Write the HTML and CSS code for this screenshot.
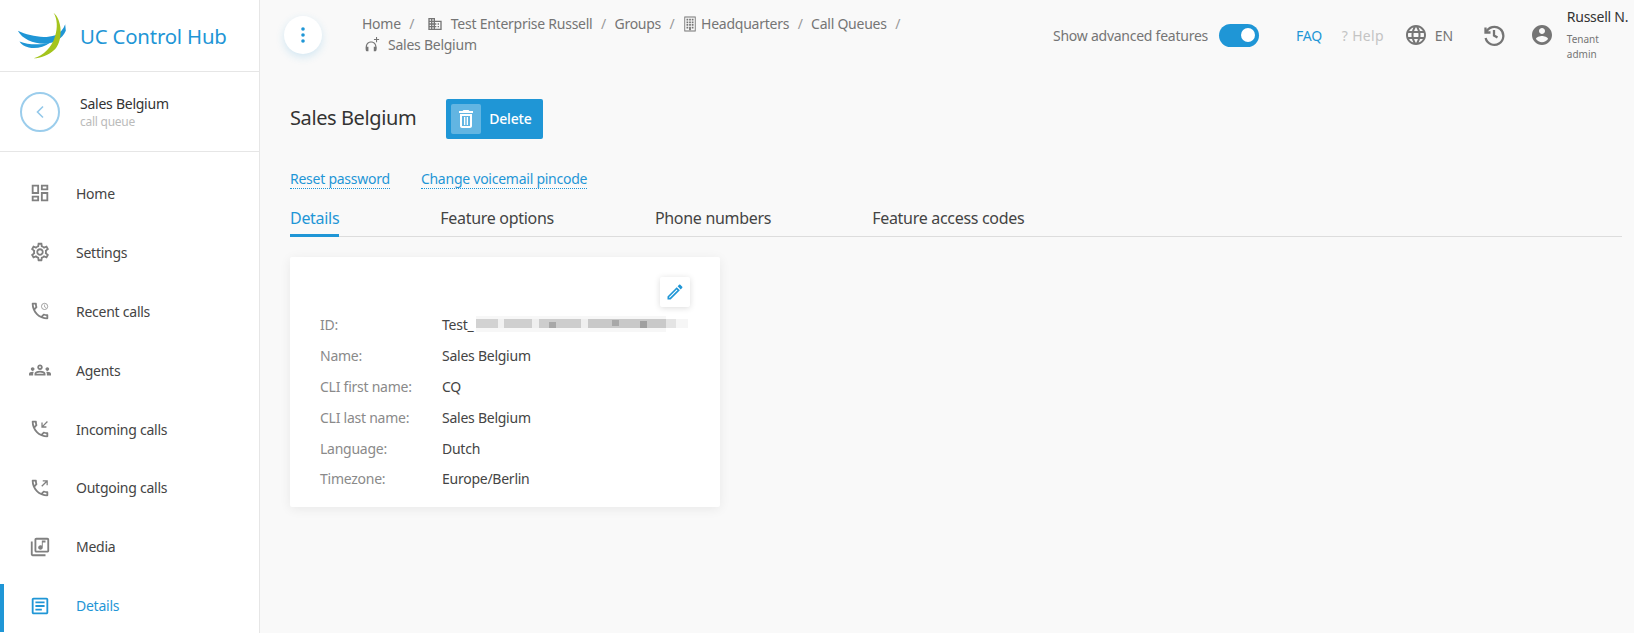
FILE: index.html
```html
<!DOCTYPE html>
<html lang="en">
<head>
  <meta charset="UTF-8">
  <meta name="viewport" content="width=device-width, initial-scale=1.0">
  <title>UC Control Hub</title>
  <link rel="stylesheet" href="styles.css">
</head>
<body>
  <aside class="sidebar">
    <div class="brand">
      <svg class="logo" viewBox="50 28 150 142">
        <path fill="#1f96d6" d="M52 85C85 100 130 110 165 98C180 92 190 80 195 65L197 85C185 110 165 122 135 124C100 125 65 110 52 85Z"/>
        <path fill="#1f96d6" d="M57 117C85 128 120 128 150 120C130 135 105 140 85 135C72 132 62 126 57 117Z"/>
        <path fill="#a4c41d" d="M160 30C185 50 190 110 165 140C145 160 120 168 100 168C130 160 155 135 165 100C172 75 172 50 160 30Z"/>
      </svg>
      <span class="brand-name">UC Control Hub</span>
    </div>
    <div class="context">
      <div class="back">
        <svg width="12" height="14" viewBox="0 0 12 14"><path d="M9 1.500 3.500 7 9 12.500" fill="none" stroke="#93c8ea" stroke-width="1.600"/></svg>
      </div>
      <div>
        <div class="context-name">Sales Belgium</div>
        <div class="context-type">call queue</div>
      </div>
    </div>
    <nav class="nav">
      <a class="nav-item">
        <svg class="nav-icon" viewBox="0 0 24 24"><path d="M19 5v2h-4V5h4M9 5v6H5V5h4m10 8v6h-4v-6h4M9 17v2H5v-2h4M21 3h-8v6h8V3zM11 3H3v10h8V3zm10 8h-8v10h8V11zm-10 4H3v6h8v-6z"/></svg>
        Home
      </a>
      <a class="nav-item">
        <svg class="nav-icon" viewBox="0 0 24 24"><path d="M19.43 12.98c.04-.32.07-.64.07-.98 0-.34-.03-.66-.07-.98l2.11-1.65c.19-.15.24-.42.12-.64l-2-3.46c-.09-.16-.26-.25-.44-.25-.06 0-.12.01-.17.03l-2.49 1c-.52-.4-1.08-.73-1.69-.98l-.38-2.65C14.46 2.18 14.25 2 14 2h-4c-.25 0-.46.18-.49.42l-.38 2.65c-.61.25-1.17.59-1.69.98l-2.49-1c-.06-.02-.12-.03-.18-.03-.17 0-.34.09-.43.25l-2 3.46c-.13.22-.07.49.12.64l2.11 1.65c-.04.32-.07.65-.07.98 0 .33.03.66.07.98l-2.11 1.65c-.19.15-.24.42-.12.64l2 3.46c.09.16.26.25.44.25.06 0 .12-.01.17-.03l2.49-1c.52.4 1.08.73 1.69.98l.38 2.65c.03.24.24.42.49.42h4c.25 0 .46-.18.49-.42l.38-2.65c.61-.25 1.17-.59 1.69-.98l2.49 1c.06.02.12.03.18.03.17 0 .34-.09.43-.25l2-3.46c.12-.22.07-.49-.12-.64l-2.11-1.65zm-1.98-1.71c.04.31.05.52.05.73 0 .21-.02.43-.05.73l-.14 1.13.89.7 1.08.84-.7 1.21-1.27-.51-1.04-.42-.9.68c-.43.32-.84.56-1.25.73l-1.06.43-.16 1.13-.2 1.35h-1.4l-.19-1.35-.16-1.13-1.06-.43c-.43-.18-.83-.41-1.23-.71l-.91-.7-1.06.43-1.27.51-.7-1.21 1.08-.84.89-.7-.14-1.13c-.03-.31-.05-.54-.05-.74s.02-.43.05-.73l.14-1.13-.89-.7-1.08-.84.7-1.21 1.27.51 1.04.42.9-.68c.43-.32.84-.56 1.25-.73l1.06-.43.16-1.13.2-1.35h1.39l.19 1.35.16 1.13 1.06.43c.43.18.83.41 1.23.71l.91.7 1.06-.43 1.27-.51.7 1.21-1.07.85-.89.7.14 1.13zM12 8c-2.21 0-4 1.79-4 4s1.79 4 4 4 4-1.79 4-4-1.79-4-4-4zm0 6c-1.1 0-2-.9-2-2s.9-2 2-2 2 .9 2 2-.9 2-2 2z"/></svg>
        Settings
      </a>
      <a class="nav-item">
        <svg class="nav-icon" viewBox="0 0 24 24"><path d="M6.54 5c.06.89.21 1.76.45 2.59l-1.2 1.2c-.41-1.2-.67-2.47-.76-3.79h1.51m9.86 12.02c.85.24 1.72.39 2.6.45v1.49c-1.32-.09-2.59-.35-3.8-.75l1.2-1.19M7.5 3H4c-.55 0-1 .45-1 1 0 9.39 7.61 17 17 17 .55 0 1-.45 1-1v-3.49c0-.55-.45-1-1-1-1.24 0-2.45-.2-3.57-.57-.1-.04-.21-.05-.31-.05-.26 0-.51.1-.71.29l-2.2 2.2c-2.83-1.45-5.15-3.76-6.59-6.59l2.2-2.2c.28-.28.36-.67.25-1.02C8.7 6.45 8.5 5.25 8.5 4c0-.55-.45-1-1-1z"/><circle cx="17" cy="7" r="3.4" fill="none" stroke="#808080" stroke-width=".8"/><path d="M16.7 5h.6v2.2l1.3.7-.3.5-1.6-.9z"/></svg>
        Recent calls
      </a>
      <a class="nav-item">
        <svg class="nav-icon" viewBox="0 0 24 24"><path d="M4 13c1.1 0 2-.9 2-2s-.9-2-2-2-2 .9-2 2 .9 2 2 2zm1.13 1.1c-.37-.06-.74-.1-1.13-.1-.99 0-1.93.21-2.78.58C.48 14.9 0 15.62 0 16.43V18h4.5v-1.61c0-.83.23-1.61.63-2.29zM20 13c1.1 0 2-.9 2-2s-.9-2-2-2-2 .9-2 2 .9 2 2 2zm4 3.43c0-.81-.48-1.53-1.22-1.85-.85-.37-1.79-.58-2.78-.58-.39 0-.76.04-1.13.1.4.68.63 1.46.63 2.29V18H24v-1.57zm-7.76-2.78c-1.17-.52-2.61-.9-4.24-.9-1.63 0-3.07.39-4.24.9C6.68 14.13 6 15.21 6 16.39V18h12v-1.61c0-1.18-.68-2.26-1.76-2.74zM8.07 16c.09-.23.13-.39.91-.69.97-.38 1.99-.56 3.02-.56s2.05.18 3.02.56c.77.3.81.46.91.69H8.07zM12 8c.55 0 1 .45 1 1s-.45 1-1 1-1-.45-1-1 .45-1 1-1m0-2c-1.66 0-3 1.34-3 3s1.34 3 3 3 3-1.34 3-3-1.34-3-3-3z"/></svg>
        Agents
      </a>
      <a class="nav-item">
        <svg class="nav-icon" viewBox="0 0 24 24"><path d="M6.54 5c.06.89.21 1.76.45 2.59l-1.2 1.2c-.41-1.2-.67-2.47-.76-3.79h1.51m9.86 12.02c.85.24 1.72.39 2.6.45v1.49c-1.32-.09-2.59-.35-3.8-.75l1.2-1.19M7.5 3H4c-.55 0-1 .45-1 1 0 9.39 7.61 17 17 17 .55 0 1-.45 1-1v-3.49c0-.55-.45-1-1-1-1.24 0-2.45-.2-3.57-.57-.1-.04-.21-.05-.31-.05-.26 0-.51.1-.71.29l-2.2 2.2c-2.83-1.45-5.15-3.76-6.59-6.59l2.2-2.2c.28-.28.36-.67.25-1.02C8.7 6.45 8.5 5.25 8.5 4c0-.55-.45-1-1-1z"/><path d="M19.6 3.4l1 1-4.7 4.7h3.1v1.4h-5.5V5h1.4v3.1z"/></svg>
        Incoming calls
      </a>
      <a class="nav-item">
        <svg class="nav-icon" viewBox="0 0 24 24"><path d="M6.54 5c.06.89.21 1.76.45 2.59l-1.2 1.2c-.41-1.2-.67-2.47-.76-3.79h1.51m9.86 12.02c.85.24 1.72.39 2.6.45v1.49c-1.32-.09-2.59-.35-3.8-.75l1.2-1.19M7.5 3H4c-.55 0-1 .45-1 1 0 9.39 7.61 17 17 17 .55 0 1-.45 1-1v-3.49c0-.55-.45-1-1-1-1.24 0-2.45-.2-3.57-.57-.1-.04-.21-.05-.31-.05-.26 0-.51.1-.71.29l-2.2 2.2c-2.83-1.45-5.15-3.76-6.59-6.59l2.2-2.2c.28-.28.36-.67.25-1.02C8.7 6.45 8.5 5.25 8.5 4c0-.55-.45-1-1-1z"/><path d="M14.4 10.6l-1-1 4.7-4.7H15V3.5h5.5V9h-1.4V5.900z"/></svg>
        Outgoing calls
      </a>
      <a class="nav-item">
        <svg class="nav-icon" viewBox="0 0 24 24"><path d="M20 2H8c-1.1 0-2 .9-2 2v12c0 1.1.9 2 2 2h12c1.1 0 2-.9 2-2V4c0-1.1-.9-2-2-2zm0 14H8V4h12v12zm-7.5-1c1.38 0 2.5-1.12 2.5-2.5V7h3V5h-4v5.51c-.42-.32-.93-.51-1.5-.51-1.38 0-2.5 1.12-2.5 2.5s1.12 2.5 2.5 2.5zM2 6v14c0 1.1.9 2 2 2h14v-2H4V6H2z"/></svg>
        Media
      </a>
      <a class="nav-item active">
        <svg class="nav-icon" viewBox="0 0 24 24"><path d="M19 5v14H5V5h14m0-2H5c-1.1 0-2 .9-2 2v14c0 1.1.9 2 2 2h14c1.1 0 2-.9 2-2V5c0-1.1-.9-2-2-2z"/><path d="M14 17H7v-2h7v2zm3-4H7v-2h10v2zm0-4H7V7h10v2z"/></svg>
        Details
      </a>
    </nav>
  </aside>

  <main class="main">
    <header class="topbar">
      <button class="menu-btn">
        <svg width="4" height="16" viewBox="0 0 4 16"><circle cx="2" cy="2" r="1.8"/><circle cx="2" cy="8" r="1.8"/><circle cx="2" cy="14" r="1.8"/></svg>
      </button>
      <div class="crumbs">
        <span>Home</span><i>/</i>
        <svg class="crumb-icon first" viewBox="0 0 24 24"><path d="M12 7V3H2v18h20V7H12zM6 19H4v-2h2v2zm0-4H4v-2h2v2zm0-4H4V9h2v2zm0-4H4V5h2v2zm4 12H8v-2h2v2zm0-4H8v-2h2v2zm0-4H8V9h2v2zm0-4H8V5h2v2zm10 12h-8v-2h2v-2h-2v-2h2v-2h-2V9h8v10zm-2-8h-2v2h2v-2zm0 4h-2v2h2v-2z"/></svg>
        <span class="after-icon">Test Enterprise Russell</span><i>/</i>
        <span>Groups</span><i>/</i>
        <svg class="crumb-icon tight" viewBox="0 0 16 18"><path d="M1.500 .5h13v17h-13zM2.500 1.500v15h11v-15z" fill-rule="evenodd"/><path d="M4 3h2v2H4zM7 3h2v2H7zM10 3h2v2h-2zM4 6h2v2H4zM7 6h2v2H7zM10 6h2v2h-2zM4 9h2v2H4zM7 9h2v2H7zM10 9h2v2h-2zM4 12h2v2H4zM10 12h2v2h-2zM7 12h2v4H7z"/></svg>
        <span>Headquarters</span><i>/</i>
        <span>Call Queues</span><i>/</i>
        <div class="crumb-break"></div>
        <svg class="crumb-icon headset" viewBox="0 0 18 18"><path d="M8 5C4.500 5 2 7.500 2 11v3h1.300v-3C3.300 8.200 5.200 6.300 8 6.300s4.700 1.900 4.700 4.700v3H14v-3C14 7.500 11.500 5 8 5z"/><path d="M2 11h3v5H3.500C2.700 16 2 15.300 2 14.500zM11 11h3v3.500c0 .8-.7 1.500-1.500 1.500H11z"/><path d="M13.500 0h1.200v2.300H17v1.200h-2.300v2.300h-1.200V3.500h-2.300V2.300h2.300z"/></svg>
        <span class="after-icon">Sales Belgium</span>
      </div>
      <div class="top-actions">
        <span class="advanced">Show advanced features</span>
        <span class="toggle"><span class="toggle-knob"></span></span>
        <a class="faq">FAQ</a>
        <a class="help">? Help</a>
        <svg class="top-icon globe" viewBox="0 0 24 24"><path d="M11.99 2C6.47 2 2 6.48 2 12s4.47 10 9.99 10C17.52 22 22 17.52 22 12S17.52 2 11.99 2zm6.93 6h-2.95c-.32-1.25-.78-2.45-1.38-3.56 1.84.63 3.37 1.91 4.33 3.56zM12 4.04c.83 1.2 1.48 2.53 1.91 3.96h-3.82c.43-1.43 1.08-2.76 1.91-3.96zM4.260 14C4.100 13.360 4 12.690 4 12s.1-1.360.26-2h3.380c-.08.66-.14 1.320-.14 2 0 .68.06 1.340.14 2H4.260zm.82 2h2.950c.32 1.250.78 2.450 1.380 3.560-1.840-.63-3.370-1.900-4.330-3.560zm2.950-8H5.080c.96-1.660 2.490-2.930 4.330-3.560C8.810 5.550 8.350 6.750 8.030 8zM12 19.960c-.83-1.200-1.480-2.530-1.910-3.960h3.820c-.43 1.430-1.080 2.760-1.910 3.960zM14.340 14H9.660c-.09-.66-.16-1.320-.16-2 0-.68.07-1.350.16-2h4.680c.09.65.16 1.320.16 2 0 .68-.07 1.340-.16 2zm.25 5.560c.6-1.110 1.060-2.310 1.380-3.560h2.950c-.96 1.650-2.490 2.930-4.330 3.560zM16.360 14c.08-.66.14-1.320.14-2 0-.68-.06-1.340-.14-2h3.380c.16.64.26 1.310.26 2s-.1 1.360-.26 2h-3.380z"/></svg>
        <span class="lang">EN</span>
        <svg class="top-icon history" viewBox="0 0 24 24" fill="none" stroke="#757575" stroke-width="2.300"><path d="M3.500 4.500v5h5"/><path d="M4 9.500A9 9 0 1 1 3.600 15"/><path d="M12 7v5.500l3.500 2"/></svg>
        <svg class="top-icon account" viewBox="0 0 24 24"><path d="M12 2C6.480 2 2 6.480 2 12s4.480 10 10 10 10-4.480 10-10S17.520 2 12 2zm0 3c1.660 0 3 1.340 3 3s-1.340 3-3 3-3-1.340-3-3 1.340-3 3-3zm0 14.200c-2.500 0-4.710-1.280-6-3.220.03-1.990 4-3.080 6-3.080 1.990 0 5.970 1.090 6 3.080-1.290 1.940-3.500 3.220-6 3.220z"/></svg>
        <div class="user">
          <div class="user-name">Russell N.</div>
          <div class="user-role">Tenant<br>admin</div>
        </div>
      </div>
    </header>

    <section class="content">
      <div class="title-row">
        <h1>Sales Belgium</h1>
        <button class="delete-btn">
          <span class="delete-icon">
            <svg width="24" height="24" viewBox="0 0 24 24" fill="#fff"><path d="M16 9v10H8V9h8m-1.500-6h-5l-1 1H5v2h14V4h-3.500l-1-1zM18 7H6v12c0 1.100.9 2 2 2h8c1.100 0 2-.9 2-2V7z"/><path d="M10 10h1.300v8H10zM12.700 10H14v8h-1.300z"/></svg>
          </span>
          Delete
        </button>
      </div>
      <div class="links">
        <a>Reset password</a>
        <a>Change voicemail pincode</a>
      </div>
      <div class="tabs">
        <a class="tab active">Details</a>
        <a class="tab">Feature options</a>
        <a class="tab">Phone numbers</a>
        <a class="tab">Feature access codes</a>
      </div>
      <div class="card">
        <div class="card-top">
          <button class="edit-btn">
            <svg width="20" height="20" viewBox="0 0 24 24" fill="#1f96d6"><path d="M3 17.250V21h3.750L17.810 9.940l-3.750-3.750L3 17.250zM5.920 19H5v-.92l9.060-9.060.92.92L5.920 19zM20.710 5.630l-2.340-2.340c-.2-.2-.45-.29-.71-.29s-.51.1-.7.29l-1.830 1.830 3.750 3.750 1.830-1.830c.39-.39.39-1.020 0-1.410z"/></svg>
          </button>
        </div>
        <div class="row"><span class="label">ID:</span><span>Test_</span><span class="blurred"></span></div>
        <div class="row"><span class="label">Name:</span><span>Sales Belgium</span></div>
        <div class="row"><span class="label">CLI first name:</span><span>CQ</span></div>
        <div class="row"><span class="label">CLI last name:</span><span>Sales Belgium</span></div>
        <div class="row"><span class="label">Language:</span><span>Dutch</span></div>
        <div class="row"><span class="label">Timezone:</span><span>Europe/Berlin</span></div>
      </div>
    </section>
  </main>
</body>
</html>
```

FILE: styles.css
```css
* {
  box-sizing: border-box;
}

body {
  margin: 0;
  height: 633px;
  overflow: hidden;
  display: flex;
  background: #f9f9f9;
  color: #333;
  font-family: "Noto Sans", sans-serif;
  font-size: 14px;
  letter-spacing: -0.25px;
}

.sidebar {
  width: 260px;
  flex-shrink: 0;
  height: 633px;
  overflow: hidden;
  background: #fff;
  border-right: 1px solid #e6e6e6;
}

.brand {
  height: 72px;
  display: flex;
  align-items: center;
  padding-left: 17px;
  border-bottom: 1px solid #e6e6e6;
}

.logo {
  width: 50px;
  height: 47px;
}

.brand-name {
  margin-left: 13px;
  color: #1f96d6;
  font-size: 20.4px;
  letter-spacing: -0.2px;
}

.context {
  height: 80px;
  display: flex;
  align-items: center;
  padding-left: 20px;
  border-bottom: 1px solid #e6e6e6;
}

.back {
  width: 40px;
  height: 40px;
  margin-right: 20px;
  border: 2px solid #9bcdec;
  border-radius: 50%;
  display: flex;
  align-items: center;
  justify-content: center;
}

.context-name {
  line-height: 20px;
}

.context-type {
  color: #bbb;
  font-size: 12px;
  line-height: 16px;
}

.nav {
  padding-top: 12px;
}

.nav-item {
  height: 58.9px;
  display: flex;
  align-items: center;
  padding-left: 29px;
  color: #444;
}

.nav-icon {
  width: 22px;
  height: 22px;
  margin-right: 25px;
  fill: #808080;
}

.nav-item.active {
  color: #1f96d6;
  position: relative;
}

.nav-item.active .nav-icon {
  fill: #1f96d6;
}

.nav-item.active::before {
  content: "";
  position: absolute;
  left: 0;
  top: 8px;
  width: 4px;
  height: 48px;
  background: #1f96d6;
}

.main {
  flex: 1;
  min-width: 0;
}

.topbar {
  height: 70px;
  display: flex;
  align-items: center;
  padding-left: 24px;
}

.menu-btn {
  width: 38px;
  height: 38px;
  padding: 0;
  border: none;
  border-radius: 50%;
  background: #fff;
  fill: #1f96d6;
  box-shadow: 0 3px 8px rgba(31, 150, 214, 0.18);
  display: flex;
  align-items: center;
  justify-content: center;
}

.crumbs {
  width: 560px;
  margin: 0 0 2px 40px;
  display: flex;
  flex-wrap: wrap;
  align-items: center;
  color: #757575;
  line-height: 21px;
}

.crumbs i {
  font-style: normal;
  color: #999;
  margin: 0 8.5px;
}

.crumb-break {
  flex-basis: 100%;
}

.crumb-icon {
  width: 16px;
  height: 16px;
  fill: #757575;
}

.crumb-icon.first {
  margin-left: 4px;
}

.crumb-icon.tight {
  width: 14px;
  margin-right: 4px;
}

.crumb-icon.headset {
  margin-left: 2px;
  flex-shrink: 0;
}

.after-icon {
  margin-left: 8px;
}

.top-actions {
  margin-left: auto;
  display: flex;
  align-items: center;
  color: #757575;
  white-space: nowrap;
  width: 581px;
}

.advanced {
  width: 166px;
}

.toggle {
  width: 40px;
  height: 23px;
  border-radius: 12px;
  background: #1f96d6;
  display: flex;
  align-items: center;
  justify-content: flex-end;
  padding-right: 4px;
}

.toggle-knob {
  width: 14px;
  height: 14px;
  border-radius: 50%;
  background: #fff;
}

.faq {
  margin-left: 37px;
  color: #1f96d6;
}

.help {
  margin-left: 20px;
  color: #c4c4c4;
  letter-spacing: 0.3px;
}

.top-icon {
  width: 24px;
  height: 24px;
  fill: #757575;
}

.globe {
  margin-left: 20px;
}

.lang {
  margin-left: 7px;
}

.history {
  margin-left: 29px;
  fill: none;
}

.account {
  margin-left: 24px;
}

.user {
  margin-left: 13px;
}

.user-name {
  color: #333;
  line-height: 18px;
  margin-bottom: 6px;
}

.user-role {
  font-size: 10px;
  line-height: 15px;
  letter-spacing: 0;
}

.content {
  padding: 29px 12px 0 30px;
}

.title-row {
  display: flex;
  align-items: center;
}

h1 {
  margin: 0 0 4px;
  font-size: 20px;
  font-weight: 400;
  letter-spacing: -0.4px;
}

.delete-btn {
  margin-left: 30px;
  width: 97px;
  height: 40px;
  padding: 0 0 2px 5px;
  border: none;
  border-radius: 2px;
  background: #1f96d6;
  color: #fff;
  font-family: inherit;
  font-size: 14px;
  font-weight: 500;
  letter-spacing: -0.2px;
  display: flex;
  align-items: center;
}

.delete-icon {
  width: 30px;
  height: 30px;
  margin: 2px 8px 0 0;
  border-radius: 2px;
  background: rgba(255, 255, 255, 0.3);
  display: flex;
  align-items: center;
  justify-content: center;
}

.links {
  margin-top: 31px;
  display: flex;
  gap: 31px;
  color: #1f96d6;
  line-height: 20px;
}

.links a {
  border-bottom: 1px dotted #1f96d6;
  height: 19px;
  line-height: 18px;
}

.tabs {
  margin-top: 17px;
  height: 31px;
  display: flex;
  gap: 101px;
  border-bottom: 1px solid #ddd;
  font-size: 16px;
  letter-spacing: -0.3px;
}

.tab {
  height: 31px;
  line-height: 24px;
  color: #444;
}

.tab.active {
  color: #1f96d6;
  border-bottom: 3px solid #1f96d6;
}

.card {
  width: 430px;
  height: 250px;
  margin-top: 20px;
  padding: 20px 30px 0;
  background: #fff;
  border-radius: 2px;
  box-shadow: 0 2px 12px rgba(0, 0, 0, 0.07);
}

.card-top {
  display: flex;
  justify-content: flex-end;
  height: 32px;
}

.edit-btn {
  width: 30px;
  height: 30px;
  padding: 0;
  border: none;
  border-radius: 2px;
  background: #fff;
  box-shadow: 0 1px 6px rgba(0, 0, 0, 0.14);
  display: flex;
  align-items: center;
  justify-content: center;
}

.row {
  height: 30.9px;
  display: flex;
  align-items: center;
  color: #444;
}

.label {
  width: 122px;
  flex-shrink: 0;
  color: #8a8a8a;
}

/* pixelated id, mosaic blocks over a soft band */
.blurred {
  width: 212px;
  height: 16px;
  margin-left: 3px;
  background:
    linear-gradient(#a8a8a8, #a8a8a8) 73px 6px / 7px 6px no-repeat,
    linear-gradient(#a8a8a8, #a8a8a8) 136px 4px / 7px 6px no-repeat,
    linear-gradient(#a0a0a0, #a0a0a0) 164px 5px / 7px 7px no-repeat,
    linear-gradient(to right,
      #d2d2d2 0 22px, #f1f1f1 22px 28px,
      #cfcfcf 28px 56px, #efefef 56px 63px,
      #cdcdcd 63px 105px, #efefef 105px 112px,
      #c9c9c9 112px 190px, #e4e4e4 190px 200px, #f6f6f6 200px) 0 3px / 100% 9px no-repeat,
    linear-gradient(#f7f7f7, #f7f7f7) 0 0 / 190px 100% no-repeat;
}
```
